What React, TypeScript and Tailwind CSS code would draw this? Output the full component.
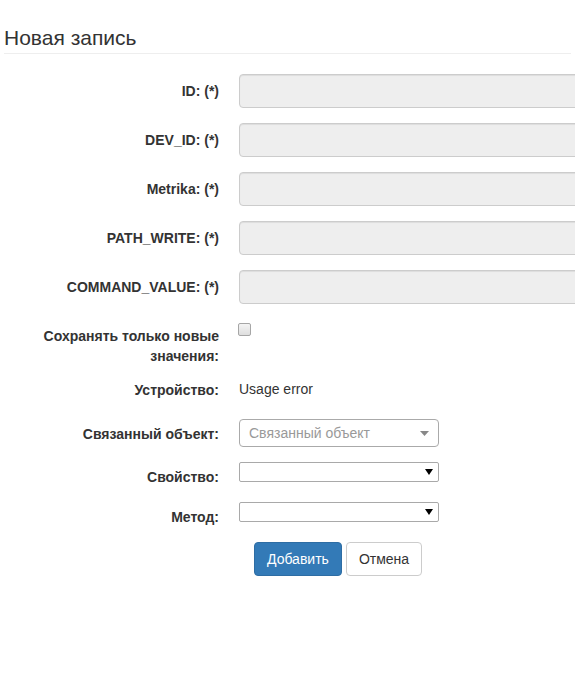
const fields = ["ID: (*)", "DEV_ID: (*)", "Metrika: (*)", "PATH_WRITE: (*)", "COMMAND_VALUE: (*)"];

const Label = ({ children }: { children: React.ReactNode }) => (
  <div className="w-[215px] shrink-0 pl-[26px] pt-[7px] text-right font-bold leading-[20px]">{children}</div>
);

const NativeSelect = () => (
  <div className="mt-[2px] flex h-[20px] w-[200px] items-center justify-end rounded-[2px] border border-[#a9a9a9] bg-white pr-[5px]">
    <svg width="8" height="6" viewBox="0 0 8 6">
      <path d="M0 0h8L4 6z" fill="#000" />
    </svg>
  </div>
);

export default function App() {
  return (
    <div className="h-[696px] w-[575px] overflow-hidden bg-white px-[4px] font-['Liberation_Sans',Arial,sans-serif] text-[14px] text-[#333]">
      <div className="border-b border-[#eee] pb-[4px] pt-[27px]">
        <h1 className="text-[21px] leading-[22px]">Новая запись</h1>
      </div>

      <form className="mt-[20px]">
        {fields.map((f) => (
          <div key={f} className="mb-[15px] flex gap-[20px]">
            <Label>{f}</Label>
            <div className="h-[34px] w-[400px] shrink-0 rounded-[4px] border border-[#ccc] bg-[#eee] shadow-[inset_0_1px_1px_rgba(0,0,0,0.075)]" />
          </div>
        ))}

        <div className="mb-[7px] flex gap-[19px]">
          <Label>Сохранять только новые значения:</Label>
          <span className="mt-[4px] h-[13px] w-[13px] rounded-[2px] border border-[#a6a6a6] bg-gradient-to-b from-[#f4f4f4] to-[#dedede]" />
        </div>

        <div className="mb-[17px] flex h-[27px] gap-[20px]">
          <Label>Устройство:</Label>
          <div className="pt-[6px] leading-[20px]">Usage error</div>
        </div>

        <div className="flex h-[43px] gap-[20px]">
          <Label>Связанный объект:</Label>
          <div className="mt-[2px] flex h-[28px] w-[200px] items-center justify-between rounded-[4px] border border-[#aaa] bg-white pl-[9px] pr-[9px]">
            <span className="text-[#999]">Связанный объект</span>
            <svg width="9" height="5" viewBox="0 0 9 5">
              <path d="M0 0h9L4.5 5z" fill="#888" />
            </svg>
          </div>
        </div>

        <div className="flex h-[40px] gap-[20px]">
          <Label>Свойство:</Label>
          <NativeSelect />
        </div>

        <div className="flex h-[42px] gap-[20px]">
          <Label>Метод:</Label>
          <NativeSelect />
        </div>

        <div className="ml-[250px] flex gap-[4px]">
          <button type="button" className="h-[34px] rounded-[4px] border border-[#2e6da4] bg-[#337ab7] px-[12px] leading-[20px] text-white">
            Добавить
          </button>
          <button type="button" className="h-[34px] rounded-[4px] border border-[#ccc] bg-white px-[12px] leading-[20px] text-[#333]">
            Отмена
          </button>
        </div>
      </form>
    </div>
  );
}
